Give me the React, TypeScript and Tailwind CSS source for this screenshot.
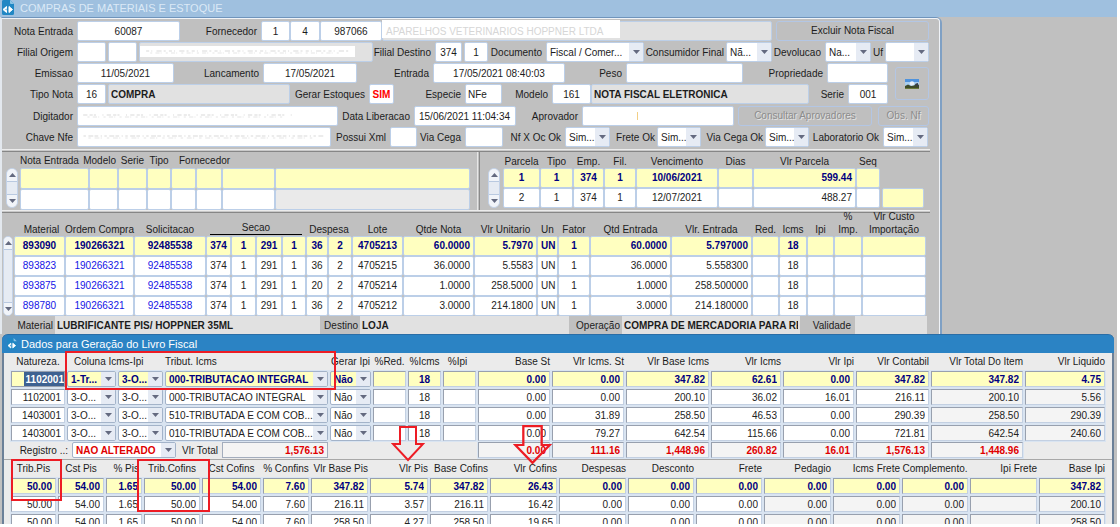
import type { ReactNode } from "react";
import { clsx } from "clsx";
import { twMerge } from "tailwind-merge";

type Align = "l" | "c" | "r";

const ALIGN: Record<Align, string> = {
  l: "text-left",
  c: "text-center",
  r: "text-right",
};

interface Head {
  text: ReactNode;
  span?: number;
  className?: string;
}

/** Column widths are proportions of the table, not pixels. */
function Columns({ widths }: { widths: number[] }) {
  const total = widths.reduce((a, b) => a + b, 0);
  return (
    <colgroup>
      {widths.map((w, i) => (
        <col key={i} style={{ width: `${(w / total) * 100}%` }} />
      ))}
    </colgroup>
  );
}

function Label({ id, children, className }: { id: string; children: ReactNode; className?: string }) {
  return (
    <label
      htmlFor={id}
      className={twMerge("flex min-w-0 items-center justify-end pt-px pr-1 whitespace-nowrap text-[#1c1c1c]", className)}
    >
      {children}
    </label>
  );
}

interface FieldProps {
  id?: string;
  name?: string;
  value?: string;
  className?: string;
  tone?: "white" | "gray";
}

function Field({ id, name, value = "", className, tone = "white" }: FieldProps) {
  return (
    <input
      id={id}
      aria-label={name}
      defaultValue={value}
      className={twMerge(
        "h-5 w-full min-w-0 rounded-[2px] border border-[#bccfe8] px-1",
        tone === "white" ? "bg-white" : "bg-[#e1e1e1]",
        className,
      )}
    />
  );
}

/** Faint residue of an erased value. */
function Smudge({ dash }: { dash: string }) {
  return (
    <svg className="h-1 w-full" preserveAspectRatio="none" viewBox="0 0 200 4" aria-hidden="true">
      <path d="M2 1H198" stroke="#dadada" strokeWidth="1" strokeDasharray={dash} />
      <path d="M6 3H190" stroke="#e6e6e6" strokeWidth="1" strokeDasharray="2 3 4 1 1 4" />
    </svg>
  );
}

function Arrow({ up = false }: { up?: boolean }) {
  return (
    <svg width="7" height="4" viewBox="0 0 7 4" aria-hidden="true">
      <path d={up ? "M0 4L3.500 0L7 4Z" : "M0 0L3.500 4L7 0Z"} fill="#646a80" />
    </svg>
  );
}

interface ComboProps {
  id?: string;
  name?: string;
  value?: string;
  className?: string;
  small?: boolean;
}

function Combo({ id, name, value = "", className, small }: ComboProps) {
  return (
    <div
      className={clsx(
        "relative min-w-0 overflow-hidden rounded-[2px] border",
        small ? "h-4 border-[#a3b3c9]" : "h-5 border-[#bccfe8]",
        className ?? "bg-white",
      )}
    >
      <select id={id} aria-label={name} className="block h-full w-full appearance-none pt-0.5 pr-3 pl-[3px] leading-none">
        <option>{value}</option>
      </select>
      <span className="pointer-events-none absolute inset-y-0 right-0 flex w-3.5 items-center justify-center bg-[#e6ebf4]">
        <Arrow />
      </span>
    </div>
  );
}

function ScrollBar({ className }: { className?: string }) {
  return (
    <div className={clsx("flex flex-col overflow-hidden rounded-full border border-[#c3d2e8] bg-[#dfe6f0]", className)}>
      <button aria-label="Subir" className="flex h-3 shrink-0 items-center justify-center bg-[#f1f4f9]">
        <Arrow up />
      </button>
      <div className="flex-1 border-y border-[#b9c9e0] bg-[#e6ebf3]" />
      <button aria-label="Descer" className="flex h-3 shrink-0 items-center justify-center bg-[#f1f4f9]">
        <Arrow />
      </button>
    </div>
  );
}

interface DataTableProps {
  widths: number[];
  heads: Head[];
  headClass: string;
  align: Align[];
  rows: string[][];
  /** Number of leading columns shown in link blue. */
  links?: number;
  grayLast?: boolean;
}

function DataTable({ widths, heads, headClass, align, rows, links = 0, grayLast }: DataTableProps) {
  return (
    <table className="w-full table-fixed border-separate border-spacing-0">
      <Columns widths={widths} />
      <thead>
        <tr className={headClass}>
          {heads.map((h, i) => (
            <th
              key={i}
              colSpan={h.span}
              className={clsx("p-0 align-bottom font-normal whitespace-nowrap text-[#1c1c1c]", h.className)}
            >
              {h.text}
            </th>
          ))}
        </tr>
      </thead>
      <tbody>
        {rows.map((row, r) => (
          <tr key={r} className={r === 0 ? "font-bold text-[#000080]" : "text-[#222]"}>
            {row.map((cell, c) => (
              <td
                key={c}
                className={clsx(
                  "h-5 overflow-hidden rounded-[2px] border border-[#bccfe8] px-[3px] py-0 leading-none whitespace-nowrap",
                  ALIGN[align[c]],
                  r === 0 ? "bg-[#ffffc0]" : grayLast && c === row.length - 1 ? "bg-[#eaeaea]" : "bg-white",
                  r > 0 && c < links && "text-[#1414e6]",
                )}
              >
                {cell}
              </td>
            ))}
          </tr>
        ))}
      </tbody>
    </table>
  );
}

function Separator() {
  return <div className="mr-2.5 h-[3px] border-t border-b border-t-[#ececec] border-b-[#868686] bg-[#c8c8c8]" />;
}

function DocIcon({ className }: { className?: string }) {
  return (
    <svg className={className} viewBox="0 0 12 15" aria-hidden="true">
      <path d="M0 1.500A1.500 1.500 0 0 1 1.500 0H8L12 4V13.500A1.500 1.500 0 0 1 10.500 15H1.500A1.500 1.500 0 0 1 0 13.500Z" fill="#2187c4" />
      <path d="M8 0L12 4H9A1 1 0 0 1 8 3Z" fill="#8cc4e6" />
      <path d="M4.500 6.500V12.500L1 9.500ZM7 6.500V12.500L10.500 9.500Z" fill="#fff" stroke="#fff" strokeWidth="1" strokeLinejoin="round" />
      <path d="M4.500 8.500L3.300 9.500L4.500 10.500Z" fill="#2187c4" />
    </svg>
  );
}

function PictureIcon() {
  return (
    <svg width="14" height="10" viewBox="0 0 14 10" aria-hidden="true">
      <rect width="14" height="10" fill="#4f93dd" />
      <rect y="3" width="14" height="4" fill="#a9cdee" />
      <circle cx="7" cy="4.500" r="2.200" fill="#e9f1f8" />
      <path d="M0 7L3 5.500L6 7L9 6.500L12 4.500L14 6V10H0Z" fill="#3e4b2a" />
      <path d="M0 9H14V10H0Z" fill="#6a7a3a" />
      <path d="M10 5L13 4V8L11 7Z" fill="#3a3f4a" />
    </svg>
  );
}

const BUTTON = "h-5 rounded-[3px] border border-[#b3c6e4] bg-[#bfbfbf] whitespace-nowrap";
const BUTTON_OFF = "text-[#8c8c8c] [text-shadow:1px_1px_0_#e4e4e4]";

/* ---------- Janela principal ---------- */

function NotaForm() {
  return (
    <form className="flex flex-col gap-px pt-0.5 pb-0.5">
      <div className="grid grid-cols-[75fr_103fr_81fr_29fr_30fr_62fr_390fr_4fr_153fr_11fr]">
        <Label id="nota">Nota Entrada</Label>
        <Field id="nota" value="60087" className="text-center" />
        <Label id="forn">Fornecedor</Label>
        <Field id="forn" value="1" className="text-center" />
        <Field name="Filial fornecedor" value="4" className="text-center" />
        <Field name="Codigo fornecedor" value="987066" className="text-center" />
        <div className="relative min-w-0">
          <Field name="Nome fornecedor" tone="gray" />
          <div className="absolute -top-px left-0 flex h-[18px] w-[61%] items-end overflow-hidden bg-white pl-1 leading-3 whitespace-nowrap text-[#d6d6d6]">
            APARELHOS VETERINARIOS HOPPNER LTDA
          </div>
        </div>
        <span />
        <button type="button" className={BUTTON}>
          Excluir Nota Fiscal
        </button>
      </div>

      <div className="grid grid-cols-[75fr_29fr_2fr_29fr_2fr_234fr_62fr_27fr_2fr_24fr_58fr_98fr_82fr_46fr_53fr_46fr_14fr_44fr_11fr]">
        <Label id="origem">Filial Origem</Label>
        <Field id="origem" />
        <span />
        <Field name="Empresa origem" />
        <span />
        <div className="relative min-w-0">
          <Field name="Nome origem" tone="gray" />
          <div className="absolute top-1 left-px flex h-[11px] w-[92%] items-center bg-white px-1">
            <Smudge dash="3 2 1 4 5 2 2 3" />
          </div>
        </div>
        <Label id="destino">Filial Destino</Label>
        <Field id="destino" value="374" className="text-center" />
        <span />
        <Field name="Empresa destino" value="1" className="text-center" />
        <Label id="doc">Documento</Label>
        <Combo id="doc" value="Fiscal / Comer..." />
        <Label id="consumidor" className="pr-0.5">Consumidor Final</Label>
        <Combo id="consumidor" value="Nã..." />
        <Label id="devolucao">Devolucao</Label>
        <Combo id="devolucao" value="Na..." />
        <Label id="uf" className="pr-0.5">Uf</Label>
        <Combo id="uf" />
      </div>

      <div className="grid grid-cols-[886fr_7fr_34fr_11fr]">
        <div className="flex min-w-0 flex-col gap-px">
          <div className="grid grid-cols-[75fr_97fr_89fr_94fr_76fr_132fr_61fr_117fr_84fr_61fr]">
            <Label id="emissao">Emissao</Label>
            <Field id="emissao" value="11/05/2021" className="text-center" />
            <Label id="lanc">Lancamento</Label>
            <Field id="lanc" value="17/05/2021" className="text-center" />
            <Label id="entrada">Entrada</Label>
            <Field id="entrada" value="17/05/2021 08:40:03" className="text-center" />
            <Label id="peso">Peso</Label>
            <Field id="peso" />
            <Label id="prop">Propriedade</Label>
            <Field id="prop" />
          </div>
          <div className="grid grid-cols-[75fr_29fr_2fr_182fr_79fr_25fr_71fr_37fr_50fr_39fr_218fr_39fr_40fr]">
            <Label id="tipo">Tipo Nota</Label>
            <Field id="tipo" value="16" className="text-center" />
            <span />
            <Field name="Descricao tipo" value="COMPRA" tone="gray" className="px-0.5 font-bold" />
            <Label id="gerar">Gerar Estoques</Label>
            <Field id="gerar" value="SIM" className="px-0 text-center font-bold text-[#f00]" />
            <Label id="especie">Especie</Label>
            <Field id="especie" value="NFe" className="px-0.5" />
            <Label id="modelo">Modelo</Label>
            <Field id="modelo" value="161" className="text-center" />
            <Field name="Descricao modelo" value="NOTA FISCAL ELETRONICA" tone="gray" className="px-0.5 font-bold" />
            <Label id="serie">Serie</Label>
            <Field id="serie" value="001" className="text-center" />
          </div>
        </div>
        <span />
        <button
          type="button"
          aria-label="Imagem"
          className="my-1 flex items-center justify-center rounded-[3px] border border-[#b3c6e4] bg-[#bfbfbf]"
        >
          <PictureIcon />
        </button>
      </div>

      <div className="mt-px grid grid-cols-[75fr_261fr_76fr_102fr_66fr_152fr_4fr_134fr_6fr_51fr_11fr]">
        <Label id="digitador">Digitador</Label>
        <div className="relative min-w-0">
          <Field id="digitador" />
          <div className="absolute inset-x-1 top-2 flex w-[82%]">
            <Smudge dash="4 2 3 1 2 6 1 3" />
          </div>
        </div>
        <Label id="liberacao">Data Liberacao</Label>
        <Field id="liberacao" value="15/06/2021 11:04:34" />
        <Label id="aprovador">Aprovador</Label>
        <div className="relative min-w-0">
          <Field id="aprovador" />
          <span className="absolute top-1.5 left-[36%] h-2 w-px bg-[#f2cf86]" />
        </div>
        <span />
        <button type="button" disabled className={clsx(BUTTON, BUTTON_OFF)}>
          Consultar Aprovadores
        </button>
        <span />
        <button type="button" disabled className={clsx(BUTTON, BUTTON_OFF)}>
          Obs. Nf
        </button>
      </div>

      <div className="grid grid-cols-[75fr_254fr_59fr_27fr_48fr_38fr_62fr_45fr_47fr_44fr_64fr_44fr_74fr_45fr_12fr]">
        <Label id="chave">Chave Nfe</Label>
        <div className="relative min-w-0">
          <Field id="chave" />
          <div className="absolute inset-x-1 top-2 flex">
            <Smudge dash="2 2 4 1 3 2 1 2" />
          </div>
        </div>
        <Label id="xml">Possui Xml</Label>
        <Field id="xml" />
        <Label id="viacega">Via Cega</Label>
        <Field id="viacega" />
        <Label id="nfoc">Nf X Oc Ok</Label>
        <Combo id="nfoc" value="Sim..." />
        <Label id="frete" className="pr-0.5">Frete Ok</Label>
        <Combo id="frete" value="Sim..." />
        <Label id="viaok" className="pr-0.5">Via Cega Ok</Label>
        <Combo id="viaok" value="Sim..." />
        <Label id="lab">Laboratorio Ok</Label>
        <Combo id="lab" value="Sim..." />
      </div>
    </form>
  );
}

function Parcelas() {
  return (
    <div className="grid grid-cols-[4fr_12fr_2fr_450fr_7fr_3fr_8fr_12fr_3fr_377fr_2fr_42fr_16fr]">
      <span />
      <ScrollBar className="mb-0.5 h-10 self-end" />
      <span />
      <DataTable
        widths={[69, 29, 29, 24, 25, 26, 53, 195]}
        headClass="h-4 leading-[14px]"
        heads={[
          {
            text: (
              <span className="flex justify-between pr-0.5">
                <span>Nota Entrada</span>
                <span>Modelo</span>
              </span>
            ),
            span: 2,
          },
          { text: "Serie", className: "text-center" },
          { text: "Tipo", className: "text-center" },
          { text: "Fornecedor", span: 4, className: "pl-2 text-left" },
        ]}
        align={["l", "l", "l", "l", "l", "l", "l", "l"]}
        rows={[Array(8).fill(""), Array(8).fill("")]}
        grayLast
      />
      <span />
      <div className="border-r border-l border-r-[#8a8a8a] border-l-[#e6e6e6]" />
      <span />
      <ScrollBar className="mb-0.5 h-10 self-end" />
      <span />
      <div className="min-w-0 pb-0.5">
        <DataTable
          widths={[37, 33, 31, 32, 82, 35, 103, 24]}
          headClass="h-4 leading-[13px]"
          heads={["Parcela", "Tipo", "Emp.", "Fil.", "Vencimento", "Dias", "Vlr Parcela", "Seq"].map((text) => ({ text }))}
          align={["c", "c", "c", "c", "c", "c", "r", "c"]}
          rows={[
            ["1", "1", "374", "1", "10/06/2021", "", "599.44", ""],
            ["2", "1", "374", "1", "12/07/2021", "", "488.27", ""],
          ]}
        />
      </div>
      <span />
      <input
        aria-label="Total parcelas"
        className="mb-0.5 h-5 w-full min-w-0 self-end rounded-[2px] border border-[#bccfe8] bg-[#ffffc0]"
      />
    </div>
  );
}

const MATERIAIS = [
  ["893090", "190266321", "92485538", "374", "1", "291", "1", "36", "2", "4705213", "60.0000", "5.7970", "UN", "1", "60.0000", "5.797000", "", "18", "", "", ""],
  ["893823", "190266321", "92485538", "374", "1", "291", "1", "36", "2", "4705215", "36.0000", "5.5583", "UN", "1", "36.0000", "5.558300", "", "18", "", "", ""],
  ["893875", "190266321", "92485538", "374", "1", "291", "1", "20", "2", "4705214", "1.0000", "258.5000", "UN", "1", "1.0000", "258.500000", "", "18", "", "", ""],
  ["898780", "190266321", "92485538", "374", "1", "291", "1", "36", "2", "4705212", "3.0000", "214.1800", "UN", "1", "3.0000", "214.180000", "", "18", "", "", ""],
];

function Materiais() {
  return (
    <div className="-mt-[3px] grid grid-cols-[1fr_10fr_1fr_912fr_14fr]">
      <span />
      <ScrollBar className="h-20 self-end" />
      <span />
      <DataTable
        widths={[51, 69, 72, 25, 25, 26, 24, 22, 24, 51, 71, 63, 21, 32, 81, 81, 27, 28, 27, 28, 64]}
        headClass="h-[26px] leading-[13px]"
        links={3}
        heads={[
          { text: "Material", className: "pl-1" },
          { text: "Ordem Compra" },
          { text: "Solicitacao" },
          { text: <span className="mx-1 block border-b border-black">Secao</span>, span: 4, className: "pb-px" },
          { text: "Despesa", span: 2 },
          { text: "Lote" },
          { text: "Qtde Nota" },
          { text: "Vlr Unitario" },
          { text: "Un" },
          { text: "Fator" },
          { text: "Qtd Entrada" },
          { text: "Vlr. Entrada" },
          { text: "Red." },
          { text: "Icms" },
          { text: "Ipi" },
          { text: <>%<br />Imp.</> },
          { text: <>Vlr Custo<br />Importação</> },
        ]}
        align={["c", "c", "c", "c", "c", "c", "c", "c", "c", "c", "r", "r", "c", "c", "r", "r", "c", "c", "c", "c", "c"]}
        rows={MATERIAIS}
      />
    </div>
  );
}

function Resumo() {
  const box = "h-[18px] rounded-none border-0 px-0.5 font-bold";
  return (
    <div className="grid grid-cols-[53fr_265fr_40fr_209fr_53fr_178fr_55fr_72fr_13fr]">
      <Label id="r-material" className="pr-0.5">Material</Label>
      <Field id="r-material" tone="gray" value="LUBRIFICANTE PIS/ HOPPNER 35ML" className={box} />
      <Label id="r-destino" className="pr-0.5">Destino</Label>
      <Field id="r-destino" tone="gray" value="LOJA" className={box} />
      <Label id="r-operacao" className="pr-0.5">Operação</Label>
      <Field id="r-operacao" tone="gray" value="COMPRA DE MERCADORIA PARA RE" className={box} />
      <Label id="r-validade">Validade</Label>
      <Field id="r-validade" tone="gray" className={box} />
    </div>
  );
}

/* ---------- Livro fiscal ---------- */

function Cell({ name, value, className }: { name: string; value: string; className: string }) {
  return (
    <input
      aria-label={name}
      defaultValue={value}
      className={clsx(
        "block h-4 w-full min-w-0 border border-t-[#98a0ae] border-r-[#c3d0e2] border-b-[#c3d0e2] border-l-[#98a0ae] px-[3px]",
        className,
      )}
    />
  );
}

const LIVRO_HEADS: Head[] = [
  { text: "Natureza.", className: "text-center" },
  { text: "Coluna Icms-Ipi", span: 2, className: "pl-2 text-left" },
  { text: "Tribut. Icms", className: "pl-px text-left" },
  { text: "Gerar Ipi", className: "text-center" },
  { text: "%Red.", className: "text-center" },
  { text: "%Icms", className: "text-center" },
  { text: "%Ipi", className: "pr-1 text-center" },
  ...["Base St", "Vlr Icms. St", "Vlr Base Icms", "Vlr Icms", "Vlr Ipi", "Vlr Contabil", "Vlr Total Do Item", "Vlr Liquido"].map(
    (text) => ({ text, className: "pr-px text-right" }),
  ),
];

const LIVRO = [
  ["1102001", "1-Tr...", "3-O...", "000-TRIBUTACAO INTEGRAL", "Não", "", "18", "", "0.00", "0.00", "347.82", "62.61", "0.00", "347.82", "347.82", "4.75"],
  ["1102001", "3-O...", "3-O...", "000-TRIBUTACAO INTEGRAL", "Não", "", "18", "", "0.00", "0.00", "200.10", "36.02", "16.01", "216.11", "200.10", "5.56"],
  ["1403001", "3-O...", "3-O...", "510-TRIBUTADA E COM COB...", "Não", "", "18", "", "0.00", "31.89", "258.50", "46.53", "0.00", "290.39", "258.50", "290.39"],
  ["1403001", "3-O...", "3-O...", "010-TRIBUTADA E COM COB...", "Não", "", "18", "", "0.00", "79.27", "642.54", "115.66", "0.00", "721.81", "642.54", "240.60"],
];

const TOTAIS = ["0.00", "111.16", "1,448.96", "260.82", "16.01", "1,576.13", "1,448.96"];

const PIS_HEADS: Head[] = [
  "Trib.Pis", "Cst Pis", "% Pis", "Trib.Cofins", "Cst Cofins", "% Confins", "Vlr Base Pis", "Vlr Pis", "Base Cofins",
  "Vlr Cofins", "Despesas", "Desconto", "Frete", "Pedagio", "Icms Frete", "Complemento.", "Ipi Frete", "Base Ipi",
].map((text, i) => ({
  text,
  className: i === 2 ? "pr-1 text-right" : i < 6 ? "text-center" : i === 15 ? "text-center" : "pr-px text-right",
}));

const PIS = [
  ["50.00", "54.00", "1.65", "50.00", "54.00", "7.60", "347.82", "5.74", "347.82", "26.43", "0.00", "0.00", "0.00", "0.00", "0.00", "0.00", "", "347.82"],
  ["50.00", "54.00", "1.65", "50.00", "54.00", "7.60", "216.11", "3.57", "216.11", "16.42", "0.00", "0.00", "0.00", "0.00", "0.00", "0.00", "", "200.10"],
  ["50.00", "54.00", "1.65", "50.00", "54.00", "7.60", "258.50", "4.27", "258.50", "19.65", "0.00", "0.00", "0.00", "0.00", "0.00", "0.00", "", "258.50"],
];

interface LivroTableProps {
  widths: number[];
  heads: Head[];
  rows: string[][];
  grayFrom: number;
  render?: (value: string, row: number, col: number, bg: string) => ReactNode;
}

function LivroTable({ widths, heads, rows, grayFrom, render }: LivroTableProps) {
  return (
    <table className="w-full table-fixed border-separate border-spacing-0">
      <Columns widths={widths} />
      <thead>
        <tr className="h-[17px]">
          {heads.map((h, i) => (
            <th key={i} colSpan={h.span} className={clsx("p-0 leading-[17px] font-normal whitespace-nowrap text-[#1c1c1c]", h.className)}>
              {h.text}
            </th>
          ))}
        </tr>
      </thead>
      <tbody className="bg-[#d9e4f1]">
        {rows.map((row, r) => (
          <tr key={r} className={r === 0 ? "font-bold text-[#000080]" : "text-[#222]"}>
            {row.map((value, c) => {
              const bg = r === 0 ? "bg-[#ffffc0]" : c >= grayFrom ? "bg-[#f4f4f4]" : "bg-white";
              return (
                <td key={c} className="px-px py-px">
                  {render?.(value, r, c, bg) ?? <Cell name={`Linha ${r + 1}, coluna ${c + 1}`} value={value} className={clsx(bg, "text-right")} />}
                </td>
              );
            })}
          </tr>
        ))}
      </tbody>
    </table>
  );
}

function renderLivro(value: string, row: number, col: number, bg: string) {
  const name = `Item ${row + 1}, coluna ${col + 1}`;
  if (row === 0 && col === 0) {
    return (
      <div className="flex h-4 justify-end border border-[#98a0ae] bg-[#ffffc0]">
        <input aria-label={name} defaultValue={value} className="h-full w-10 min-w-0 bg-[#3d6191] text-right text-white" />
      </div>
    );
  }
  if (col >= 1 && col <= 4) return <Combo small name={name} value={value} className={bg} />;
  if (col === 6) return <Cell name={name} value={value} className={clsx(bg, "text-center")} />;
  return null;
}

function DownArrow({ className }: { className: string }) {
  return (
    <svg className={clsx("pointer-events-none absolute", className)} viewBox="0 0 34 36" preserveAspectRatio="none" aria-hidden="true">
      <path d="M9 1H25V18H32L17 34L2 18H9Z" fill="none" stroke="#ed1c24" strokeWidth="2" />
    </svg>
  );
}

function LivroFiscal() {
  const mark = "pointer-events-none absolute border-2 border-[#ed1c24]";
  return (
    <section className="relative mr-[3px] ml-0.5 rounded-t-md border-x-2 border-[#6b8098] bg-[#ebebeb]">
      <header className="-mx-0.5 flex h-[19px] items-center gap-1 rounded-t-md border-t border-[#2a6da6] bg-[#2b83c4] pl-[5px] text-white">
        <DocIcon className="h-3 w-2.5" />
        <h2 className="text-[11px] leading-none">Dados para Geração do Livro Fiscal</h2>
      </header>
      <div className="px-1.5">
        <LivroTable
          widths={[56, 51, 47, 165, 43, 35, 35, 35, 74, 74, 85, 72, 73, 75, 94, 82]}
          heads={LIVRO_HEADS}
          rows={LIVRO}
          grayFrom={14}
          render={renderLivro}
        />
        <div className="grid h-[17px] grid-cols-[62fr_104fr_46fr_106fr_149fr_74fr_74fr_85fr_72fr_73fr_75fr_94fr_82fr] text-[#e00000]">
          <Label id="registro" className="pt-0">Registro ..:</Label>
          <Combo small id="registro" value="NÃO ALTERADO" className="bg-white font-bold" />
          <Label id="vlrtotal" className="pt-0">Vlr Total</Label>
          <input
            id="vlrtotal"
            defaultValue="1,576.13"
            className="h-4 w-full min-w-0 border border-[#a3adbd] bg-[#f4f4f4] px-[3px] text-right font-bold"
          />
          <span />
          {TOTAIS.map((value, i) => (
            <div key={i} className="min-w-0 bg-[#d9e4f1] px-px">
              <Cell name={`Total ${i + 1}`} value={value} className="bg-[#f4f4f4] text-right font-bold" />
            </div>
          ))}
        </div>
      </div>
      <div className="h-px bg-[#a8a8a8]" />
      <div className="px-1.5">
        <LivroTable
          widths={[47, 48, 38, 58, 61, 48, 59, 60, 60, 69, 69, 68, 68, 69, 69, 68, 69, 68]}
          heads={PIS_HEADS}
          rows={PIS}
          grayFrom={13}
        />
      </div>

      {/* Marcações sobre os campos de tributação */}
      <div className={clsx(mark, "top-[17px] left-[61px] h-[39px] w-[271px]")} />
      <div className={clsx(mark, "top-[125px] left-[7px] h-[42px] w-[51px]")} />
      <div className={clsx(mark, "top-[125px] left-[133px] h-[53px] w-[73px]")} />
      <DownArrow className="top-[92px] left-[387px] h-9 w-[34px]" />
      <DownArrow className="top-[91px] left-[509px] h-10 w-[39px]" />
    </section>
  );
}

export default function App() {
  return (
    <main className="mr-[3px] h-[calc(100vh-3px)] overflow-hidden bg-[#c0c0c0] font-['Liberation_Sans',Arial,sans-serif] text-[10px] leading-none text-[#1c1c1c]">
      <header className="flex h-[17px] items-center gap-1.5 bg-[#9fc0df] pl-0.5">
        <DocIcon className="h-[15px] w-3 self-start" />
        <h1 className="text-[11px] leading-none text-[#dbe9f6]">COMPRAS DE MATERIAIS E ESTOQUE</h1>
      </header>
      <div className="grid grid-cols-[942fr_175fr]">
        <section className="min-w-0 rounded-tr-md border-t border-r-2 border-l-2 border-t-[#6f94bb] border-r-[#7fa0c4] border-l-[#e3e8ee]">
          <div className="rounded-tr-[4px] border-t border-r border-[#f0f3f7]">
            <div className="-mr-px">
              <NotaForm />
              <Separator />
              <Parcelas />
              <Separator />
              <Materiais />
              <Resumo />
            </div>
          </div>
        </section>
      </div>
      <LivroFiscal />
    </main>
  );
}
